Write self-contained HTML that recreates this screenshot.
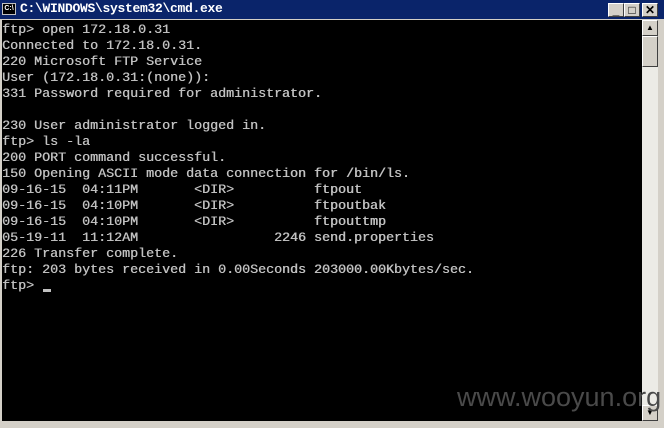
<!DOCTYPE html>
<html><head><meta charset="utf-8"><style>
html,body{margin:0;padding:0}
body{width:664px;height:428px;background:#d4d0c8;position:relative;overflow:hidden}
#title{position:absolute;left:0;top:0;width:664px;height:19px;background:#0a246a}
#title .t{position:absolute;left:20px;top:1px;color:#fff;font:bold 13px "Liberation Mono",monospace;letter-spacing:-0.3px}
#icon{position:absolute;left:2px;top:3px;width:14px;height:12px;background:#000;border:1px solid #c0c0c0;box-sizing:border-box;color:#fff;font:bold 7px "Liberation Sans",sans-serif;line-height:10px;text-align:center}
.btn{position:absolute;top:3px;width:16px;height:14px;background:#d4d0c8;border-top:1px solid #fff;border-left:1px solid #fff;border-right:1px solid #404040;border-bottom:1px solid #404040;box-sizing:border-box;font:bold 12px "Liberation Sans",sans-serif;text-align:center;line-height:12px;color:#000}
#con{position:absolute;left:2px;top:20px;width:640px;height:401px;background:#000}
pre{margin:0;position:absolute;left:0;top:3px;color:#c0c0c0;font:13.33px/16px "Liberation Mono",monospace;text-shadow:0.4px 0 0 #c0c0c0}
#sb{position:absolute;left:642px;top:20px;width:16px;height:401px;background:#ecebe6}
.arr{position:absolute;left:0;width:16px;height:16px;background:#d4d0c8;border-top:1px solid #fff;border-left:1px solid #fff;border-right:1px solid #404040;border-bottom:1px solid #404040;box-sizing:border-box}
#wm{position:absolute;left:457px;top:382px;color:#4a4a4a;font:27px "Liberation Sans",sans-serif}
</style></head><body>
<div id="title"><div id="icon">C:\</div><div class="t">C:\WINDOWS\system32\cmd.exe</div>
<div class="btn" style="left:608px">_</div><div class="btn" style="left:624px">□</div><div class="btn" style="left:642px">✕</div></div>
<div id="con"><pre>ftp&gt; open 172.18.0.31
Connected to 172.18.0.31.
220 Microsoft FTP Service
User (172.18.0.31:(none)):
331 Password required for administrator.

230 User administrator logged in.
ftp&gt; ls -la
200 PORT command successful.
150 Opening ASCII mode data connection for /bin/ls.
09-16-15  04:11PM       &lt;DIR&gt;          ftpout
09-16-15  04:10PM       &lt;DIR&gt;          ftpoutbak
09-16-15  04:10PM       &lt;DIR&gt;          ftpouttmp
05-19-11  11:12AM                 2246 send.properties
226 Transfer complete.
ftp: 203 bytes received in 0.00Seconds 203000.00Kbytes/sec.
ftp&gt; </pre><div style="position:absolute;left:41px;top:269px;width:8px;height:3px;background:#c0c0c0"></div></div>
<div id="sb"><div class="arr" style="top:0;font-size:8px;text-align:center;line-height:14px">▲</div><div class="arr" style="top:16px;height:31px"></div><div class="arr" style="top:385px;font-size:8px;text-align:center;line-height:14px">▼</div></div>
<div id="wm">www.wooyun.org</div>
</body></html>
